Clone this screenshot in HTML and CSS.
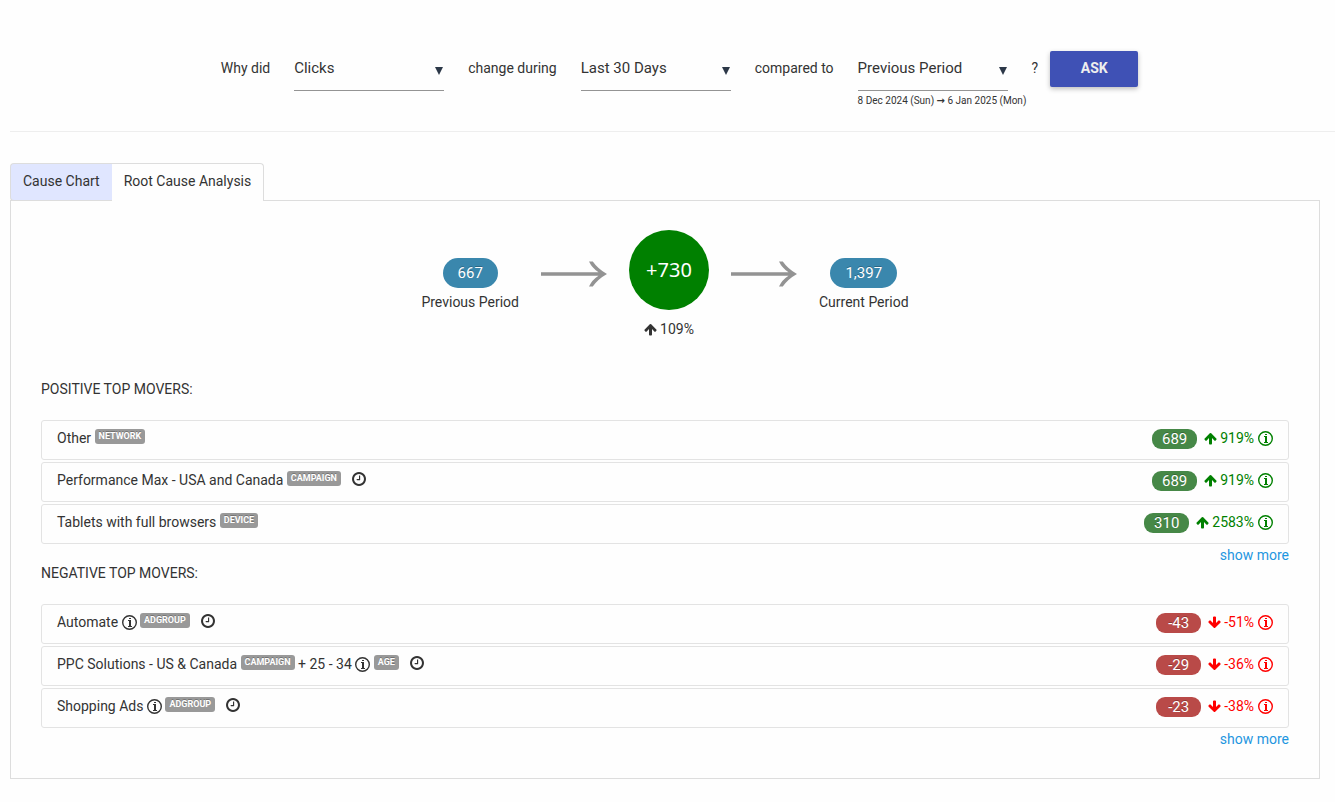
FILE: index.html
```
<!DOCTYPE html>
<html lang="en">
<head>
    <meta charset="UTF-8">
    <meta name="viewport" content="width=device-width, initial-scale=1.0">
    <title>Root Cause Analysis</title>
    <link rel="stylesheet" href="styles.css">
</head>
<body>
    <svg class="sprite" aria-hidden="true">
        <symbol id="up" viewBox="64 64 1664 1664"><path d="M1675 971q0 51-37 90l-75 75q-38 38-91 38-54 0-90-38l-294-293v704q0 52-37.5 84.5t-90.5 32.5h-128q-53 0-90.5-32.5t-37.5-84.5v-704l-294 293q-36 38-90 38t-90-38l-75-75q-38-38-38-90 0-53 38-91l651-651q35-37 90-37 54 0 91 37l651 651q37 39 37 91z"/></symbol>
        <symbol id="down" viewBox="64 64 1664 1664"><path transform="rotate(180 896 896)" d="M1675 971q0 51-37 90l-75 75q-38 38-91 38-54 0-90-38l-294-293v704q0 52-37.5 84.5t-90.5 32.5h-128q-53 0-90.5-32.5t-37.5-84.5v-704l-294 293q-36 38-90 38t-90-38l-75-75q-38-38-38-90 0-53 38-91l651-651q35-37 90-37 54 0 91 37l651 651q37 39 37 91z"/></symbol>
        <symbol id="clock" viewBox="128 128 1536 1536"><path d="M1024 544v448q0 14-9 23t-23 9h-320q-14 0-23-9t-9-23v-64q0-14 9-23t23-9h224v-352q0-14 9-23t23-9h64q14 0 23 9t9 23zm416 352q0-148-73-273t-198-198-273-73-273 73-198 198-73 273 73 273 198 198 273 73 273-73 198-198 73-273zm224 0q0 209-103 385.5t-279.5 279.5-385.5 103-385.5-103-279.5-279.5-103-385.5 103-385.5 279.5-279.5 385.5-103 385.5 103 279.5 279.5 103 385.5z"/></symbol>
        <symbol id="info" viewBox="0 0 15 15"><circle cx="7.5" cy="7.5" r="6.8" fill="none" stroke="currentColor" stroke-width="1.4"/><path d="M7 3h2v1H7zM6 5h3v6h1v1H6v-1h1V6H6z"/></symbol>
        <symbol id="long" viewBox="0 0 66 26"><path d="M0 11.2h57.5Q51 7 48 0.5h3.8Q57 8 66 13Q57 18 51.8 25.5H48Q51 19 57.5 14.8H0z"/></symbol>
    </svg>

    <form class="question">
        <label for="metric">Why did</label>
        <div class="field">
            <select id="metric"><option>Clicks</option></select>
        </div>
        <label for="range">change during</label>
        <div class="field">
            <select id="range"><option>Last 30 Days</option></select>
        </div>
        <label for="compare">compared to</label>
        <div class="field">
            <select id="compare"><option>Previous Period</option></select>
            <small>8 Dec 2024 (Sun) <i>→</i> 6 Jan 2025 (Mon)</small>
        </div>
        <span>?</span>
        <button class="ask" type="button">ASK</button>
    </form>

    <main>
        <nav class="tabs">
            <a class="tab tab-chart" href="#chart">Cause Chart</a>
            <a class="tab tab-active" href="#analysis">Root Cause Analysis</a>
        </nav>
        <section class="panel" id="analysis">
            <div class="summary">
                <div class="period">
                    <span class="total">667</span>
                    <span>Previous Period</span>
                </div>
                <svg class="long"><use href="#long"/></svg>
                <div class="change">
                    <span class="circle">+730</span>
                    <span class="percent"><svg class="arrow"><use href="#up"/></svg>109%</span>
                </div>
                <svg class="long"><use href="#long"/></svg>
                <div class="period">
                    <span class="total">1,397</span>
                    <span>Current Period</span>
                </div>
            </div>

            <h2>POSITIVE TOP MOVERS:</h2>
            <ul class="movers positive">
                <li>
                    <span class="name">Other <b class="tag">NETWORK</b></span>
                    <span class="value">689</span>
                    <span class="percent"><svg class="arrow"><use href="#up"/></svg>919%</span>
                    <svg class="info"><use href="#info"/></svg>
                </li>
                <li>
                    <span class="name">Performance Max - USA and Canada <b class="tag">CAMPAIGN</b><svg class="clock"><use href="#clock"/></svg></span>
                    <span class="value">689</span>
                    <span class="percent"><svg class="arrow"><use href="#up"/></svg>919%</span>
                    <svg class="info"><use href="#info"/></svg>
                </li>
                <li>
                    <span class="name">Tablets with full browsers <b class="tag">DEVICE</b></span>
                    <span class="value">310</span>
                    <span class="percent"><svg class="arrow"><use href="#up"/></svg>2583%</span>
                    <svg class="info"><use href="#info"/></svg>
                </li>
            </ul>
            <a class="more" href="#more-positive">show more</a>

            <h2>NEGATIVE TOP MOVERS:</h2>
            <ul class="movers negative">
                <li>
                    <span class="name">Automate <svg class="info"><use href="#info"/></svg> <b class="tag">ADGROUP</b><svg class="clock"><use href="#clock"/></svg></span>
                    <span class="value">-43</span>
                    <span class="percent"><svg class="arrow"><use href="#down"/></svg>-51%</span>
                    <svg class="info"><use href="#info"/></svg>
                </li>
                <li>
                    <span class="name">PPC Solutions - US &amp; Canada <b class="tag">CAMPAIGN</b> + 25 - 34 <svg class="info"><use href="#info"/></svg> <b class="tag">AGE</b><svg class="clock"><use href="#clock"/></svg></span>
                    <span class="value">-29</span>
                    <span class="percent"><svg class="arrow"><use href="#down"/></svg>-36%</span>
                    <svg class="info"><use href="#info"/></svg>
                </li>
                <li>
                    <span class="name">Shopping Ads <svg class="info"><use href="#info"/></svg> <b class="tag">ADGROUP</b><svg class="clock"><use href="#clock"/></svg></span>
                    <span class="value">-23</span>
                    <span class="percent"><svg class="arrow"><use href="#down"/></svg>-38%</span>
                    <svg class="info"><use href="#info"/></svg>
                </li>
            </ul>
            <a class="more" href="#more-negative">show more</a>
        </section>
    </main>
</body>
</html>
```
FILE: styles.css
```
* {
    box-sizing: border-box;
}
body {
    margin: 0;
    padding-left: 10px;
    background-color: #fefefe;
    color: #333;
    font-family: Roboto, Arial, sans-serif;
    font-size: 14px;
    line-height: 20px;
}
svg {
    fill: currentColor;
    flex: none;
}
a {
    text-decoration: none;
}
.sprite {
    display: none;
}

/* question bar */
.question {
    display: flex;
    justify-content: center;
    align-items: flex-start;
    gap: 24px;
    height: 132px;
    padding: 51px 0 0 14px;
    border-bottom: 1px solid #eee;
}
.question label,
.question > span {
    line-height: 34px;
}
.field {
    position: relative;
    width: 150px;
    white-space: nowrap;
}
.field::after {
    content: "";
    position: absolute;
    top: 16px;
    right: 1px;
    border: 4px solid transparent;
    border-top: 8px solid #2c3848;
    border-bottom: 0;
    pointer-events: none;
}
select {
    display: block;
    appearance: none;
    width: 100%;
    height: 40px;
    padding: 0 16px 6px 0;
    border: 0;
    border-bottom: 1px solid #949494;
    border-radius: 0;
    background: none;
    color: #333;
    font: 15px Roboto, Arial, sans-serif;
}
.field small {
    display: block;
    font-size: 10px;
}
.field i {
    font-family: "DejaVu Sans", sans-serif;
    font-style: normal;
    font-weight: 700;
}
.ask {
    width: 88px;
    height: 36px;
    margin-left: -12px;
    padding-bottom: 3px;
    border: 0;
    border-radius: 2px;
    background-color: #3f51b5;
    box-shadow: 0 2px 5px rgba(0, 0, 0, 0.26);
    color: #eee;
    font: 700 14px Roboto, Arial, sans-serif;
}

/* tabs */
main {
    padding: 31px 15px 20px 0;
}
.tabs {
    display: flex;
}
.tab {
    height: 38px;
    padding: 7px 12px;
    border: 1px solid #ddd;
    color: #333;
}
.tab-chart {
    border-right: 0;
    border-radius: 4px 0 0 4px;
    background-color: #e0e6ff;
}
.tab-active {
    z-index: 1;
    border-left: 0;
    border-bottom: 0;
    border-radius: 0 4px 0 0;
    background-color: #fefefe;
}
.panel {
    margin-top: -1px;
    padding: 29px 30px 31px;
    border: 1px solid #ddd;
}

/* totals */
.summary {
    display: flex;
    justify-content: center;
    gap: 22px;
    margin-bottom: 40px;
}
.period {
    display: flex;
    flex-direction: column;
    align-items: center;
    gap: 4px;
    padding-top: 28px;
}
.total,
.value,
.tag {
    color: #fff;
    text-shadow: 0 -1px 0 rgba(0, 0, 0, 0.25);
}
.total,
.value {
    font-size: 15px;
}
.total {
    padding: 0 15px;
    border-radius: 15px;
    background-color: #3a87ad;
    line-height: 30px;
}
.long {
    width: 66px;
    height: 26px;
    margin-top: 31px;
    color: #939393;
}
.change {
    display: flex;
    flex-direction: column;
    align-items: center;
    gap: 9px;
}
.circle {
    width: 80px;
    border-radius: 50%;
    background-color: green;
    color: #fff;
    font-family: "Noto Sans", sans-serif;
    font-size: 20px;
    line-height: 80px;
    text-align: center;
}
.percent {
    display: flex;
    align-items: center;
    gap: 3px;
}
.arrow {
    width: 13px;
    height: 13px;
}

/* movers */
h2 {
    margin: 0 0 21px;
    font-size: 14px;
    font-weight: 400;
    line-height: 20px;
}
.movers {
    display: grid;
    gap: 2px;
    margin: 0;
    padding: 0;
    list-style: none;
}
.movers li {
    display: flex;
    align-items: flex-start;
    height: 40px;
    padding: 7px 15px;
    border: 1px solid #e3e3e3;
    border-radius: 3px;
}
.name {
    margin-right: auto;
}
.tag {
    display: inline-block;
    padding: 0 4px;
    border-radius: 3px;
    background-color: #999;
    font-size: 9px;
    line-height: 15px;
    vertical-align: 4px;
}
.clock {
    width: 14px;
    height: 14px;
    margin-left: 11px;
    vertical-align: -1px;
}
.info {
    width: 15px;
    height: 15px;
}
.name .info {
    vertical-align: -3px;
}
li > .info {
    margin: 3px 0 0 4px;
}
.value {
    width: 45px;
    margin: 1px 7px 0 0;
    border-radius: 9px;
    text-align: center;
}
.positive .value {
    background-color: #468847;
}
.negative .value {
    background-color: #b94a48;
}
.positive .percent,
.positive li > .info {
    color: green;
}
.negative .percent,
.negative li > .info {
    color: red;
}
.more {
    display: block;
    width: fit-content;
    margin: 1px 0 -2px auto;
    color: #1e96e0;
}
```
